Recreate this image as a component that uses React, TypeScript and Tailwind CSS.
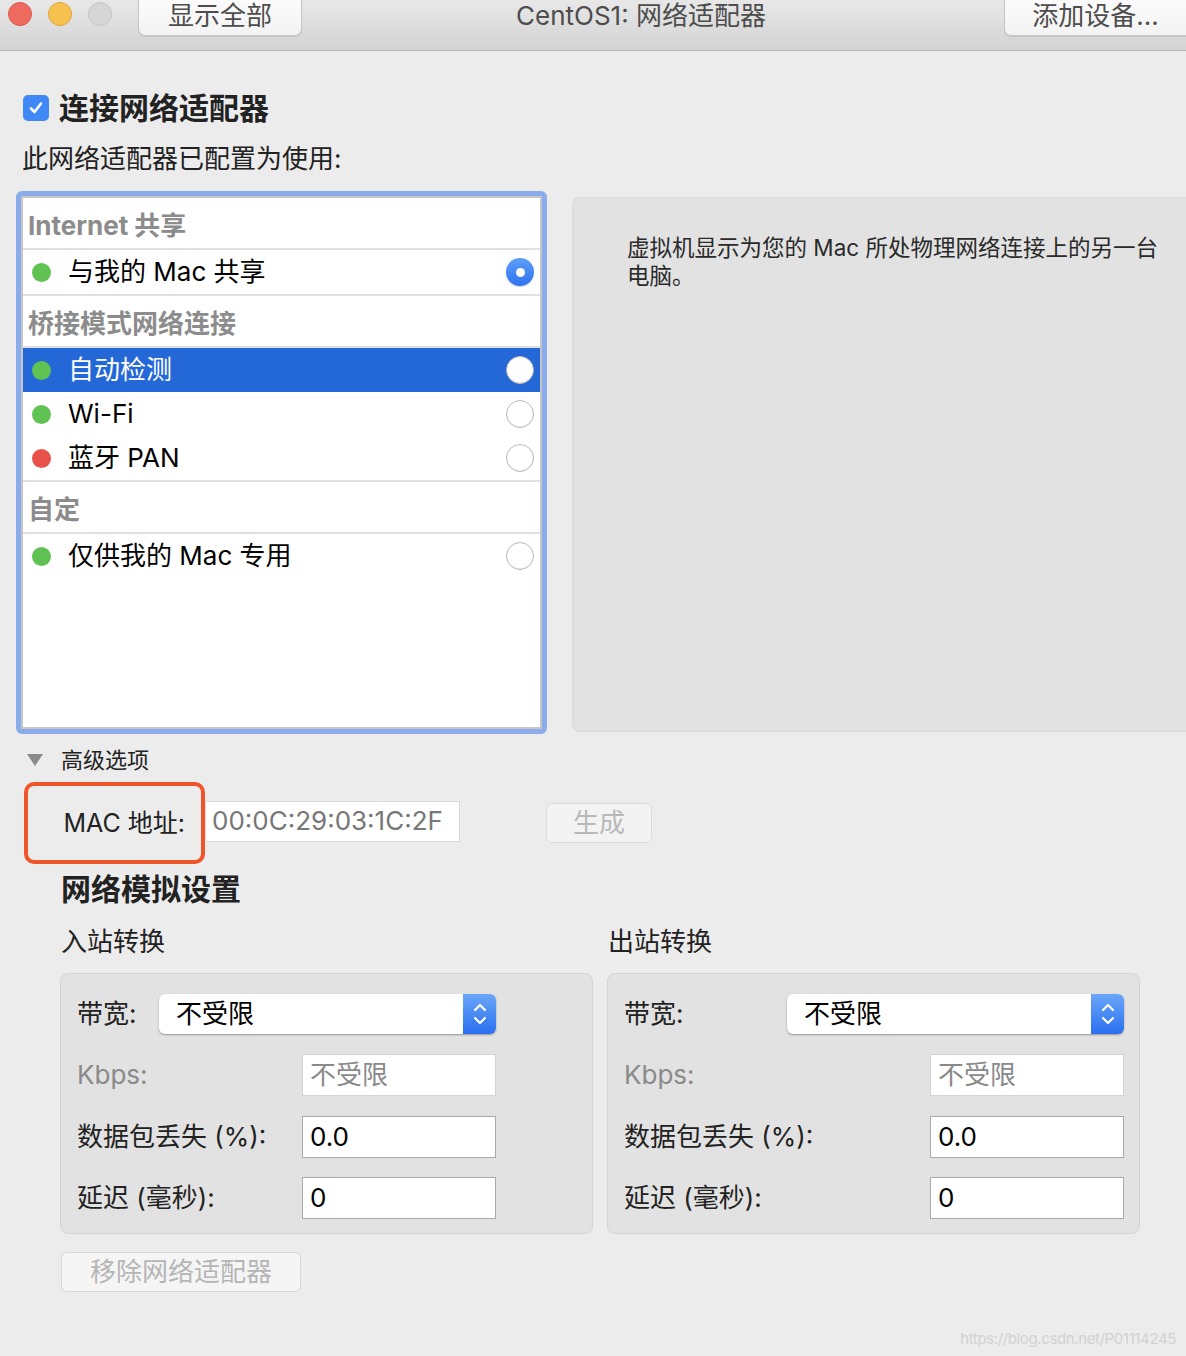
import React from "react";

type ItemProps = {
  label: string;
  dot: "green" | "red";
  selected?: boolean;
  checked?: boolean;
  last?: boolean;
};

const Radio: React.FC<{ checked?: boolean }> = ({ checked }) =>
  checked ? (
    <div className="w-[28px] h-[28px] rounded-full bg-gradient-to-b from-[#5d9ff9] to-[#2f72ee] flex items-center justify-center shadow-[0_1px_1px_rgba(0,0,0,0.2)]">
      <div className="w-[9px] h-[9px] rounded-full bg-white" />
    </div>
  ) : (
    <div className="w-[28px] h-[28px] rounded-full bg-white border border-[#b8b8b8] shadow-[inset_0_-1px_1px_rgba(0,0,0,0.08)]" />
  );

const Item: React.FC<ItemProps> = ({ label, dot, selected, checked, last }) => (
  <div
    className={`h-[44px] flex items-center pl-[9px] pr-[6px] ${
      selected ? "bg-[#2468d8] text-white" : "text-black"
    } ${last ? "border-b-2 border-[#e0e0e0] h-[46px]" : ""}`}
  >
    <div className={`w-[19px] h-[19px] rounded-full ${dot === "green" ? "bg-[#60c253]" : "bg-[#e8524a]"}`} />
    <span className="ml-[17px] text-[26px] leading-none flex-1">{label}</span>
    <Radio checked={checked} />
  </div>
);

const Header: React.FC<{ label: string }> = ({ label }) => (
  <div className="h-[52px] border-b-2 border-[#e0e0e0] flex items-center pl-[5px] pt-[5px]">
    <span className="text-[26px] font-bold text-[#8c8c8c] leading-none">{label}</span>
  </div>
);

const Chevrons = () => (
  <svg width="16" height="26" viewBox="0 0 16 26" fill="none" stroke="white" strokeWidth="2.2" strokeLinecap="round" strokeLinejoin="round">
    <path d="M3 9 L8 4 L13 9" />
    <path d="M3 17 L8 22 L13 17" />
  </svg>
);

type BoxProps = {
  selectGap: string;
  inputGap: string;
};

const Field: React.FC<{ value: string; muted?: boolean }> = ({ value, muted }) => (
  <div
    className={`w-[194px] h-[42px] bg-white border ${
      muted ? "border-[#d4d4d4] text-[#8a8a8a]" : "border-[#a9a9a9] text-black"
    } flex items-center pl-[7px] text-[26px] leading-none`}
  >
    {value}
  </div>
);

const ShapingBox: React.FC<BoxProps> = ({ selectGap, inputGap }) => (
  <div className="w-[533px] h-[261px] bg-[#e2e2e2] border border-[#d4d4d4] rounded-[8px] pt-[20px] pl-[16px]">
    <div className="flex items-center h-[40px]">
      <span className={`${selectGap} text-[26px] text-[#222] leading-none`}>带宽:</span>
      <div className="w-[337px] h-[40px] bg-white rounded-[6px] shadow-[0_1px_2px_rgba(0,0,0,0.35)] flex items-stretch overflow-hidden">
        <span className="flex-1 flex items-center pl-[17px] text-[26px] text-black leading-none">不受限</span>
        <div className="w-[33px] bg-gradient-to-b from-[#6aa6f8] to-[#2a6ef0] flex items-center justify-center">
          <Chevrons />
        </div>
      </div>
    </div>
    <div className="flex items-center h-[42px] mt-[20px]">
      <span className={`${inputGap} text-[26px] text-[#8a8a8a] leading-none`}>Kbps:</span>
      <Field value="不受限" muted />
    </div>
    <div className="flex items-center h-[42px] mt-[20px]">
      <span className={`${inputGap} text-[26px] text-[#222] leading-none`}>数据包丢失 (%):</span>
      <Field value="0.0" />
    </div>
    <div className="flex items-center h-[42px] mt-[19px]">
      <span className={`${inputGap} text-[26px] text-[#222] leading-none`}>延迟 (毫秒):</span>
      <Field value="0" />
    </div>
  </div>
);

export default function App() {
  return (
    <div className="w-[1186px] h-[1356px] bg-[#ececec] overflow-hidden relative font-['Inter','Noto_Sans_CJK_SC',sans-serif]">
      {/* Title bar */}
      <div className="h-[51px] bg-gradient-to-b from-[#e8e8e8] to-[#d3d3d3] border-b border-[#b3b3b3] flex items-start">
        <div className="flex items-center gap-[16px] pl-[8px] pt-[2px]">
          <div className="w-[24px] h-[24px] rounded-full bg-[#ee6a5f] border border-[#d95448]" />
          <div className="w-[24px] h-[24px] rounded-full bg-[#f6c14d] border border-[#dea53a]" />
          <div className="w-[24px] h-[24px] rounded-full bg-[#d6d6d6] border border-[#c4c4c4]" />
        </div>
        <div className="ml-[26px] w-[164px] h-[36px] bg-gradient-to-b from-[#fbfbfb] to-[#f3f3f3] border border-t-0 border-[#c6c6c6] rounded-b-[7px] flex items-center justify-center shadow-[0_1px_1px_rgba(0,0,0,0.1)]">
          <span className="text-[26px] text-[#4d4d4d] leading-none -mt-[4px]">显示全部</span>
        </div>
        <div className="ml-[214px] h-[32px] flex items-center">
          <span className="text-[26px] text-[#4d4d4d] leading-none">CentOS1: 网络适配器</span>
        </div>
        <div className="ml-auto w-[182px] h-[36px] bg-gradient-to-b from-[#fbfbfb] to-[#f3f3f3] border border-t-0 border-r-0 border-[#c6c6c6] rounded-bl-[7px] flex items-center justify-center shadow-[0_1px_1px_rgba(0,0,0,0.1)]">
          <span className="text-[26px] text-[#4d4d4d] leading-none -mt-[4px]">添加设备...</span>
        </div>
      </div>

      {/* Content */}
      <div className="pl-[16px]">
        <div className="flex items-center mt-[42px] ml-[7px]">
          <div className="w-[26px] h-[26px] rounded-[5px] bg-[#3f88f6] flex items-center justify-center">
            <svg width="18" height="18" viewBox="0 0 18 18" fill="none" stroke="white" strokeWidth="2.6" strokeLinecap="round" strokeLinejoin="round">
              <path d="M4 9.5 L7.5 13 L14 4.5" />
            </svg>
          </div>
          <span className="ml-[10px] text-[30px] font-bold text-[#222] leading-none">连接网络适配器</span>
        </div>
        <div className="mt-[23px] ml-[6px] text-[26px] text-[#222] leading-none">此网络适配器已配置为使用:</div>

        <div className="flex mt-[19px] h-[543px]">
          <div className="w-[531px] h-[543px] bg-[#8aacea] rounded-[6px] p-[5px]">
            <div className="h-full bg-white border-2 border-[#c6c6c6]">
              <Header label="Internet 共享" />
              <Item label="与我的 Mac 共享" dot="green" checked last />
              <Header label="桥接模式网络连接" />
              <Item label="自动检测" dot="green" selected />
              <Item label="Wi-Fi" dot="green" />
              <Item label="蓝牙 PAN" dot="red" last />
              <Header label="自定" />
              <Item label="仅供我的 Mac 专用" dot="green" />
            </div>
          </div>
          <div className="ml-[25px] mt-[6px] flex-1 h-[535px] bg-[#e2e2e2] border border-[#d9d9d9] border-r-0 rounded-l-[8px] pl-[54px] pt-[36px]">
            <p className="text-[22.5px] leading-[28px] text-[#2a2a2a] w-[540px]">
              虚拟机显示为您的 Mac 所处物理网络连接上的另一台电脑。
            </p>
          </div>
        </div>

        {/* Advanced */}
        <div className="flex items-center mt-[15px] h-[22px]">
          <svg width="18" height="14" viewBox="0 0 18 14" className="ml-[10px]">
            <path d="M1 1 L17 1 L9 13 Z" fill="#8a8a8a" />
          </svg>
          <span className="ml-[17px] text-[22px] text-[#222] leading-none">高级选项</span>
        </div>

        <div className="flex items-center mt-[11px] ml-[8px]">
          <div className="w-[181px] h-[82px] border-[4px] border-[#ef552a] rounded-[10px] flex items-center justify-end pr-[16px]">
            <span className="text-[25px] text-[#222] leading-none">MAC 地址:</span>
          </div>
          <div className="w-[255px] h-[41px] bg-white border border-[#dadada] flex items-center pl-[6px] text-[26px] text-[#777] leading-none -mt-[4px]">
            00:0C:29:03:1C:2F
          </div>
          <div className="ml-[86px] w-[106px] h-[40px] bg-[#f3f3f3] border border-[#dcdcdc] rounded-[6px] flex items-center justify-center text-[26px] text-[#b8b8b8] leading-none">
            生成
          </div>
        </div>

        <div className="ml-[45px] mt-[10px] text-[30px] font-bold text-[#222] leading-none">网络模拟设置</div>

        <div className="flex ml-[45px] mt-[25px]">
          <span className="w-[547px] text-[26px] text-[#222] leading-none">入站转换</span>
          <span className="text-[26px] text-[#222] leading-none">出站转换</span>
        </div>

        <div className="flex ml-[44px] mt-[18px] gap-[14px]">
          <ShapingBox selectGap="w-[82px]" inputGap="w-[225px]" />
          <ShapingBox selectGap="w-[163px]" inputGap="w-[306px]" />
        </div>

        <div className="ml-[45px] mt-[18px] w-[240px] h-[40px] bg-[#f5f5f5] border border-[#d8d8d8] rounded-[6px] flex items-center justify-center text-[26px] text-[#b5b5b5] leading-none">
          移除网络适配器
        </div>
      </div>

      <div className="absolute right-[10px] bottom-[10px] text-[15px] text-[#d2d2d2] leading-none tracking-tight">
        https://blog.csdn.net/P01114245
      </div>
    </div>
  );
}
